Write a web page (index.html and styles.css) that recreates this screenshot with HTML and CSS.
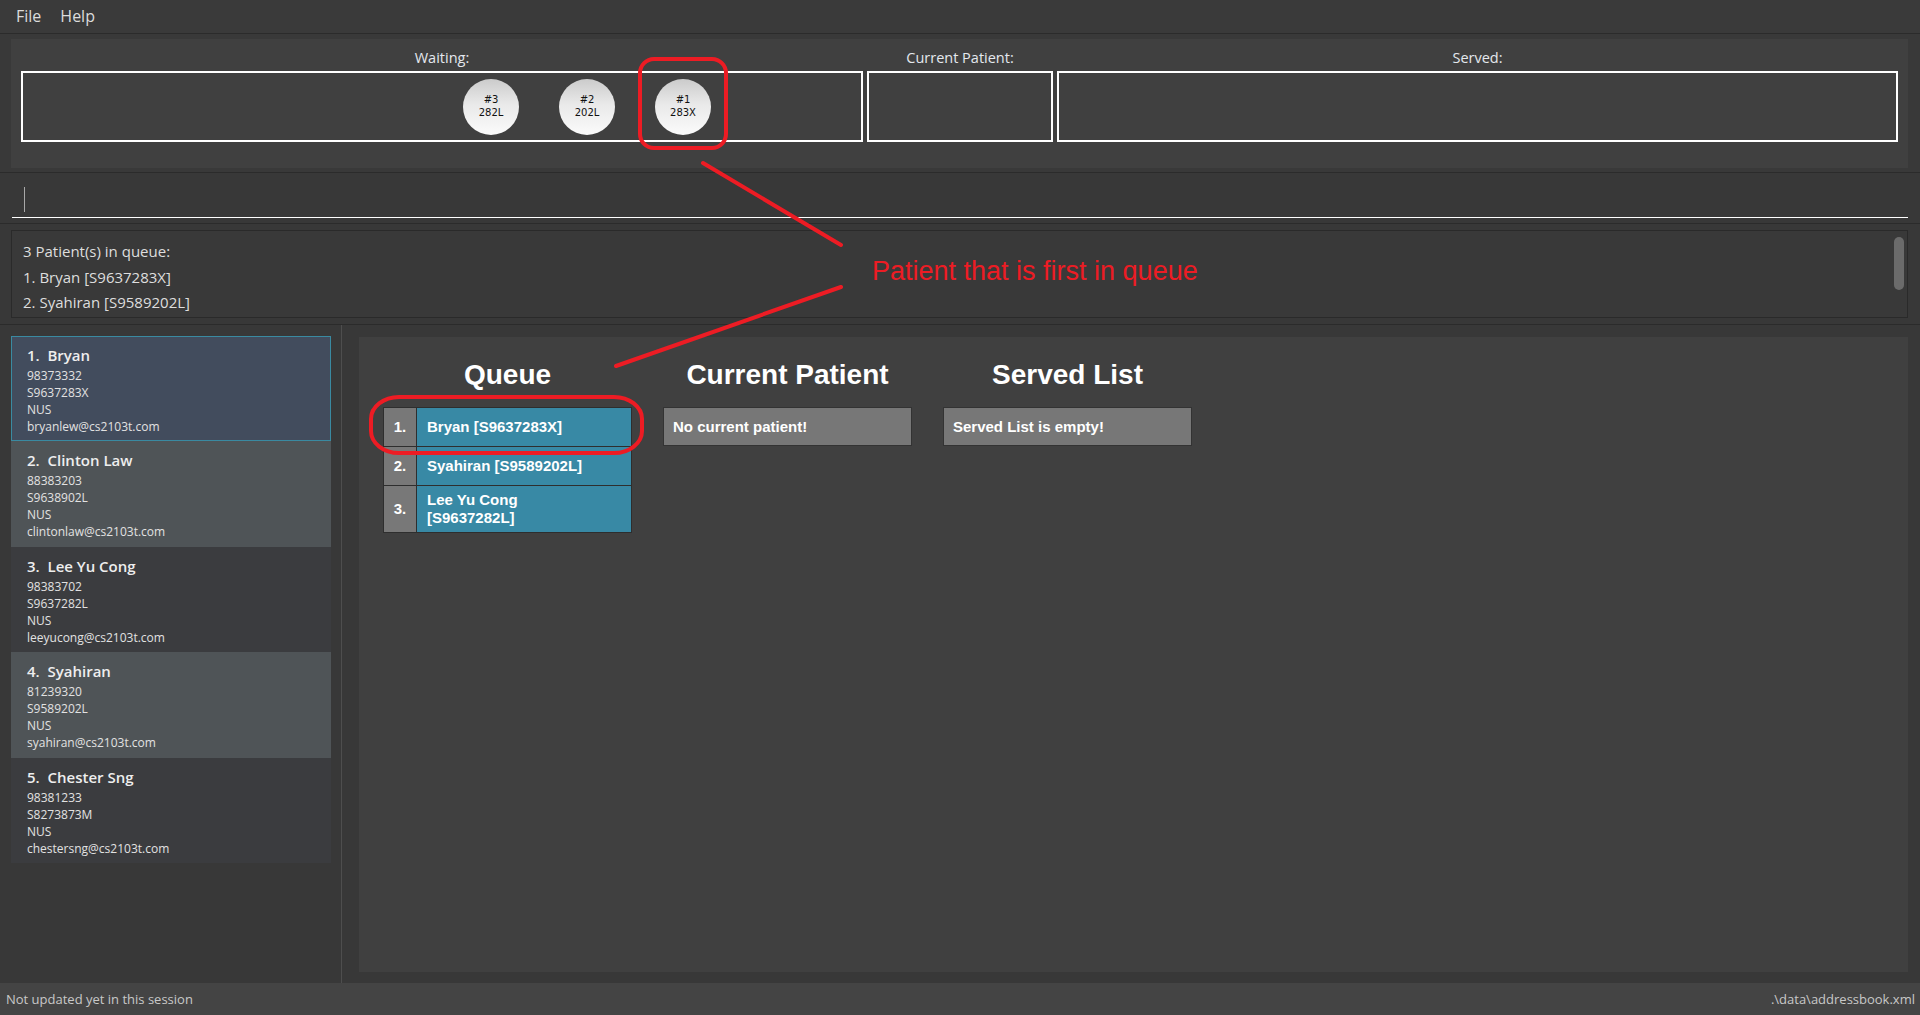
FILE: index.html
```
<!DOCTYPE html>
<html>
<head>
<meta charset="utf-8">
<link rel="stylesheet" href="styles.css">
</head>
<body>
<div class="app">
  <div class="menubar"><span class="menu-item">File</span><span class="menu-item">Help</span></div>

  <div class="queue-panel">
    <div class="queue-inner">
      <div class="qgrid">
        <div class="qlabel">Waiting:</div>
        <div class="qlabel">Current Patient:</div>
        <div class="qlabel">Served:</div>
        <div class="qbox waiting">
          <div class="ball"><span>#3</span><span>282L</span></div>
          <div class="ball"><span>#2</span><span>202L</span></div>
          <div class="ball"><span>#1</span><span>283X</span></div>
        </div>
        <div class="qbox"></div>
        <div class="qbox"></div>
      </div>
    </div>
  </div>

  <div class="command">
    <div class="cmd-field"><span class="caret"></span></div>
  </div>

  <div class="result-area">
    <div class="result-box">
      <div class="result-text">
        <p>3 Patient(s) in queue:</p>
        <p>1. Bryan [S9637283X]</p>
        <p>2. Syahiran [S9589202L]</p>
      </div>
      <div class="scroll-thumb"></div>
    </div>
  </div>

  <div class="main">
    <div class="list-panel">
      <div class="card selected">
        <div class="card-name">1.  Bryan</div>
        <div class="card-lines"><div>98373332</div><div>S9637283X</div><div>NUS</div><div>bryanlew@cs2103t.com</div></div>
      </div>
      <div class="card even">
        <div class="card-name">2.  Clinton Law</div>
        <div class="card-lines"><div>88383203</div><div>S9638902L</div><div>NUS</div><div>clintonlaw@cs2103t.com</div></div>
      </div>
      <div class="card odd">
        <div class="card-name">3.  Lee Yu Cong</div>
        <div class="card-lines"><div>98383702</div><div>S9637282L</div><div>NUS</div><div>leeyucong@cs2103t.com</div></div>
      </div>
      <div class="card even">
        <div class="card-name">4.  Syahiran</div>
        <div class="card-lines"><div>81239320</div><div>S9589202L</div><div>NUS</div><div>syahiran@cs2103t.com</div></div>
      </div>
      <div class="card odd">
        <div class="card-name">5.  Chester Sng</div>
        <div class="card-lines"><div>98381233</div><div>S8273873M</div><div>NUS</div><div>chestersng@cs2103t.com</div></div>
      </div>
    </div>
    <div class="divider"></div>
    <div class="content">
      <div class="content-inner">
        <div class="column">
          <h2 class="col-title">Queue</h2>
          <div class="qlist">
            <div class="qrow"><div class="qnum">1.</div><div class="qname"><span>Bryan [S9637283X]</span></div></div>
            <div class="qrow"><div class="qnum">2.</div><div class="qname"><span>Syahiran [S9589202L]</span></div></div>
            <div class="qrow"><div class="qnum">3.</div><div class="qname"><span>Lee Yu Cong [S9637282L]</span></div></div>
          </div>
        </div>
        <div class="column">
          <h2 class="col-title">Current Patient</h2>
          <div class="info-box">No current patient!</div>
        </div>
        <div class="column">
          <h2 class="col-title">Served List</h2>
          <div class="info-box">Served List is empty!</div>
        </div>
      </div>
    </div>
  </div>

  <div class="statusbar"><span>Not updated yet in this session</span><span>.\data\addressbook.xml</span></div>

  <svg class="annot" width="1920" height="1015" viewBox="0 0 1920 1015">
    <rect x="640" y="59" width="86" height="89" rx="14" ry="14" fill="none" stroke="#ed1c24" stroke-width="4"/>
    <line x1="703" y1="163" x2="841" y2="245" stroke="#ed1c24" stroke-width="4" stroke-linecap="round"/>
    <line x1="841" y1="287" x2="616" y2="366" stroke="#ed1c24" stroke-width="4" stroke-linecap="round"/>
    <rect x="371" y="397" width="271" height="56" rx="28" ry="22" fill="none" stroke="#ed1c24" stroke-width="4"/>
  </svg>
  <div class="annot-text">Patient that is first in queue</div>
</div>
</body>
</html>
```

FILE: styles.css
```
* { box-sizing: border-box; }
html, body { margin: 0; padding: 0; }
body {
  background: #383838;
  font-family: "Open Sans", "Noto Sans", sans-serif;
  color: #dddddd;
}
.app {
  position: relative;
  width: 1920px;
  height: 1015px;
  display: flex;
  flex-direction: column;
  overflow: hidden;
}

/* Menu */
.menubar {
  height: 34px;
  background: #3a3a3a;
  border-bottom: 1px solid #2b2b2b;
  display: flex;
  align-items: center;
  padding-left: 16px;
  gap: 19px;
  font-size: 16px;
  color: #dcdcdc;
}
.menu-item { line-height: 20px; padding-bottom: 2px; }

/* Queue visual panel */
.queue-panel {
  height: 139px;
  background: #393939;
  border-bottom: 1px solid #2b2b2b;
  padding: 5px 12px 0 11px;
}
.queue-inner {
  height: 129px;
  background: #404040;
  padding: 10px 10px 0 10px;
}
.qgrid {
  display: grid;
  grid-template-columns: 842px 186px 1fr;
  grid-template-rows: 18px 71px;
  column-gap: 4px;
  row-gap: 4px;
}
.qlabel {
  text-align: center;
  font-size: 14.5px;
  line-height: 18px;
  color: #e4e8ee;
}
.qbox {
  border: 2px solid #ffffff;
  height: 71px;
}
.waiting {
  display: flex;
  align-items: center;
  gap: 40px;
  padding-left: 440px;
}
.ball {
  width: 56px;
  height: 56px;
  border-radius: 50%;
  background: linear-gradient(to bottom, #cbcbcb 0%, #e9e9e9 45%, #fbfbfb 100%);
  display: flex;
  flex-direction: column;
  align-items: center;
  justify-content: center;
  font-family: "DejaVu Sans", "Liberation Sans", sans-serif;
  font-size: 10px;
  line-height: 12.5px;
  color: #111;
}

/* Command box */
.command {
  height: 51px;
  background: #383838;
  border-bottom: 1px solid #2b2b2b;
  padding: 0 12px;
}
.cmd-field {
  position: relative;
  height: 45px;
  border-bottom: 1px solid #ffffff;
}
.caret {
  position: absolute;
  left: 12px;
  top: 14px;
  width: 1px;
  height: 25px;
  background: #a8a8a8;
}

/* Result display */
.result-area {
  height: 101px;
  background: #383838;
  border-bottom: 1px solid #2b2b2b;
  padding: 6px 12px 0 11px;
}
.result-box {
  position: relative;
  height: 88px;
  border: 1px solid #2a2a2a;
  background: #393939;
  padding: 8px 11px 7px;
}
.result-text p {
  margin: 0;
  font-size: 15px;
  line-height: 25.5px;
  color: #dedede;
}
.scroll-thumb {
  position: absolute;
  right: 3px;
  top: 6px;
  width: 10px;
  height: 53px;
  border-radius: 5px;
  background: #6b6b6b;
}

/* Main */
.main {
  flex: 1;
  display: flex;
  min-height: 0;
}
.list-panel {
  width: 341px;
  padding: 11px 10px 0 11px;
  background: #383838;
}
.divider {
  width: 1px;
  background: #4e4e4e;
}
.card {
  height: 105.4px;
  padding: 8px 16px 0 16px;
}
.card.selected {
  background: #424c5d;
  border: 1px solid #3a8aa1;
  padding: 7px 15px 0 15px;
}
.card.even { background: #4f5457; }
.card.odd { background: #3b3c3f; }
.card-name {
  white-space: pre;
  font-size: 15px;
  font-weight: 600;
  line-height: 22px;
  color: #eeeeee;
}
.card-lines {
  margin-top: 1px;
  font-size: 12px;
  line-height: 17px;
  color: #e2e2e2;
}

.content {
  flex: 1;
  background: #383838;
  padding: 12px 12px 11px 17px;
}
.content-inner {
  height: 100%;
  background: #404040;
  padding: 20px 24px;
  display: flex;
  align-items: flex-start;
  gap: 31px;
}
.column { width: 249px; }
.col-title {
  margin: 0 0 14px 0;
  text-align: center;
  font-family: "Liberation Sans", Arial, sans-serif;
  font-weight: bold;
  font-size: 28px;
  line-height: 36px;
  color: #ffffff;
}
.qlist {
  border: 1px solid #2e2e2e;
  border-top: none;
}
.qrow {
  display: grid;
  grid-template-columns: 33px 1fr;
  min-height: 39px;
  border-top: 1px solid #2e2e2e;
  font-family: "Liberation Sans", Arial, sans-serif;
  font-weight: bold;
  font-size: 15px;
  line-height: 18px;
  color: #ffffff;
}
.qnum {
  background: #787878;
  border-right: 1px solid #2e2e2e;
  display: flex;
  align-items: center;
  justify-content: center;
}
.qname {
  background: #3889a5;
  display: flex;
  align-items: center;
  padding: 5px 10px;
}
.qname span { max-width: 170px; }
.info-box {
  height: 39px;
  background: #777777;
  border: 1px solid #333333;
  display: flex;
  align-items: center;
  padding: 0 9px;
  font-family: "Liberation Sans", Arial, sans-serif;
  font-weight: bold;
  font-size: 15px;
  color: #ffffff;
}

/* Status bar */
.statusbar {
  height: 32px;
  background: #444444;
  display: flex;
  justify-content: space-between;
  align-items: center;
  padding: 0 5px 0 6px;
  font-size: 13px;
  color: #c8c8c8;
}

/* Annotations */
.annot {
  position: absolute;
  left: 0;
  top: 0;
  pointer-events: none;
}
.annot-text {
  position: absolute;
  left: 872px;
  top: 254px;
  font-family: "Liberation Sans", Arial, sans-serif;
  font-size: 27px;
  line-height: 34px;
  color: #ed1c24;
  white-space: nowrap;
}
```
